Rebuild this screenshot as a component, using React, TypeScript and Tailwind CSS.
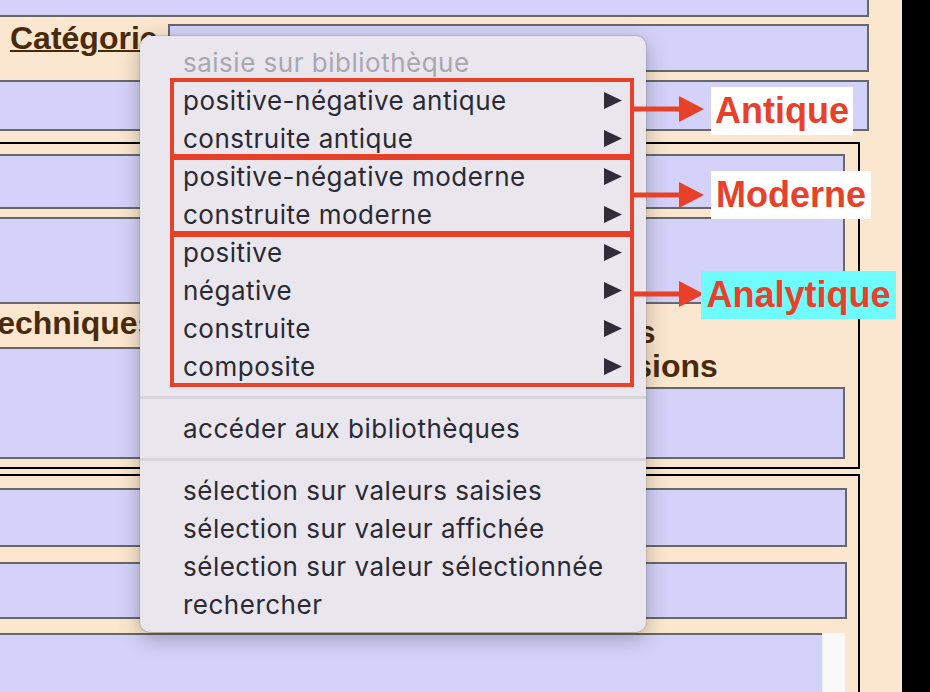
import React from 'react';

const box = 'border-2 border-[#68686c] bg-[#d4d2f8]';
const label = 'text-[32px] leading-[34px] font-bold text-[#4a2a0c] whitespace-nowrap';

type Item = { text: string; sub?: boolean; disabled?: boolean } | 'sep';

const items: Item[] = [
    { text: 'saisie sur bibliothèque', disabled: true },
    { text: 'positive-négative antique', sub: true },
    { text: 'construite antique', sub: true },
    { text: 'positive-négative moderne', sub: true },
    { text: 'construite moderne', sub: true },
    { text: 'positive', sub: true },
    { text: 'négative', sub: true },
    { text: 'construite', sub: true },
    { text: 'composite', sub: true },
    'sep',
    { text: 'accéder aux bibliothèques' },
    'sep',
    { text: 'sélection sur valeurs saisies' },
    { text: 'sélection sur valeur affichée' },
    { text: 'sélection sur valeur sélectionnée' },
    { text: 'rechercher' },
];

function Arrow({ top }: { top: number }) {
    return (
        <svg
            className="absolute left-[632px]"
            style={{ top: top - 13 }}
            width="74"
            height="26"
            viewBox="0 0 74 26"
        >
            <rect x="0" y="10.5" width="50" height="5" fill="#e8412a" />
            <polygon points="47,0 72,13 47,26" fill="#e8412a" />
        </svg>
    );
}

function ContextMenu() {
    return (
        <div
            className="absolute left-[140px] top-[36px] w-[506px] h-[596px] rounded-[10px] bg-[#e9e6ee] shadow-[0_6px_22px_rgba(0,0,0,0.28)] ring-1 ring-black/10 pt-[7px]"
            style={{ fontFamily: 'Inter, "Noto Sans", sans-serif' }}
        >
            {items.map((it, i) =>
                it === 'sep' ? (
                    <div key={i} className="h-[24px] flex items-center">
                        <div className="h-[3px] w-full bg-[#d7d4db]" />
                    </div>
                ) : (
                    <div
                        key={i}
                        className={`flex items-center h-[38px] pl-[43px] pr-[24px] text-[26px] tracking-[0.5px] ${
                            it.disabled ? 'text-[#a9a7b0]' : 'text-[#2b2a33]'
                        }`}
                    >
                        <span className="flex-1 whitespace-nowrap">{it.text}</span>
                        {it.sub && (
                            <svg width="18" height="17" viewBox="0 0 18 17">
                                <polygon points="0,0 18,8.5 0,17" fill="#2f2d3a" />
                            </svg>
                        )}
                    </div>
                )
            )}
        </div>
    );
}

export default function App() {
    return (
        <div
            className="relative w-[930px] h-[692px] overflow-hidden flex"
            style={{ fontFamily: '"Liberation Sans", Arial, sans-serif' }}
        >
            {/* page */}
            <div className="w-[902px] h-full bg-[#fbe7cf] overflow-hidden">
                <div className="-ml-[40px] flex flex-col">
                    <div className={`h-[17px] mr-[33px] border-t-0 ${box}`} />

                    {/* catégorie */}
                    <div className="flex h-[63px] mr-[33px]">
                        <div className="w-[208px] pl-[50px] pt-[4px]">
                            <span className={`${label} underline decoration-2`}>Catégorie</span>
                        </div>
                        <div className={`flex-1 mt-[7px] h-[48px] ${box}`} />
                    </div>

                    <div className={`h-[51px] mr-[33px] ${box}`} />

                    {/* bloc 1 */}
                    <div className="mt-[11px] ml-[10px] mr-[42px] border-2 border-black pl-[8px] pr-[13px] pt-[10px] pb-[8px]">
                        <div className={`h-[55px] ${box}`} />
                        <div className={`mt-[8px] h-[87px] ${box}`} />
                        <div className="grid grid-cols-[545px_1fr] gap-x-[10px]">
                            <div>
                                <div className={`h-[43px] pt-[2px] ${label}`}>Techniques</div>
                                <div className={`h-[112px] ${box}`} />
                            </div>
                            <div>
                                <div className={`h-[83px] pt-[11px] pl-[5px] ${label}`}>
                                    Formes
                                    <br />
                                    dimensions
                                </div>
                                <div className={`h-[72px] ${box}`} />
                            </div>
                        </div>
                    </div>

                    {/* bloc 2 */}
                    <div className="mt-[5px] ml-[10px] mr-[42px] border-2 border-black pl-[8px] pr-[11px] pt-[12px] h-[260px]">
                        <div className={`h-[59px] ${box}`} />
                        <div className={`mt-[15px] h-[57px] ${box}`} />
                        <div className="mt-[14px] h-[100px] mr-[2px] flex">
                            <div className="flex-1 border-t-2 border-l-2 border-[#68686c] bg-[#d4d2f8]" />
                            <div className="w-[23px] bg-[#f9f9f9] border-l border-[#ececec]" />
                        </div>
                    </div>
                </div>
            </div>
            <div className="w-[28px] h-full bg-black" />

            <ContextMenu />

            {/* annotations */}
            <div className="absolute left-[170px] top-[78px] w-[464px] h-[80px] border-4 border-[#e8412a]" />
            <div className="absolute left-[170px] top-[156px] w-[464px] h-[79px] border-4 border-[#e8412a]" />
            <div className="absolute left-[170px] top-[233px] w-[464px] h-[154px] border-4 border-[#e8412a]" />

            <Arrow top={109} />
            <Arrow top={195} />
            <Arrow top={294} />

            <div className="absolute left-[711px] top-[87px] w-[142px] h-[48px] bg-white flex items-center justify-center text-[36px] leading-[36px] font-bold text-[#e8412a]">
                Antique
            </div>
            <div className="absolute left-[711px] top-[171px] w-[160px] h-[48px] bg-white flex items-center justify-center text-[36px] leading-[36px] font-bold text-[#e8412a]">
                Moderne
            </div>
            <div className="absolute left-[701px] top-[271px] w-[195px] h-[48px] bg-[#6efcfc] flex items-center justify-center text-[36px] leading-[36px] font-bold text-[#e8412a]">
                Analytique
            </div>
        </div>
    );
}
